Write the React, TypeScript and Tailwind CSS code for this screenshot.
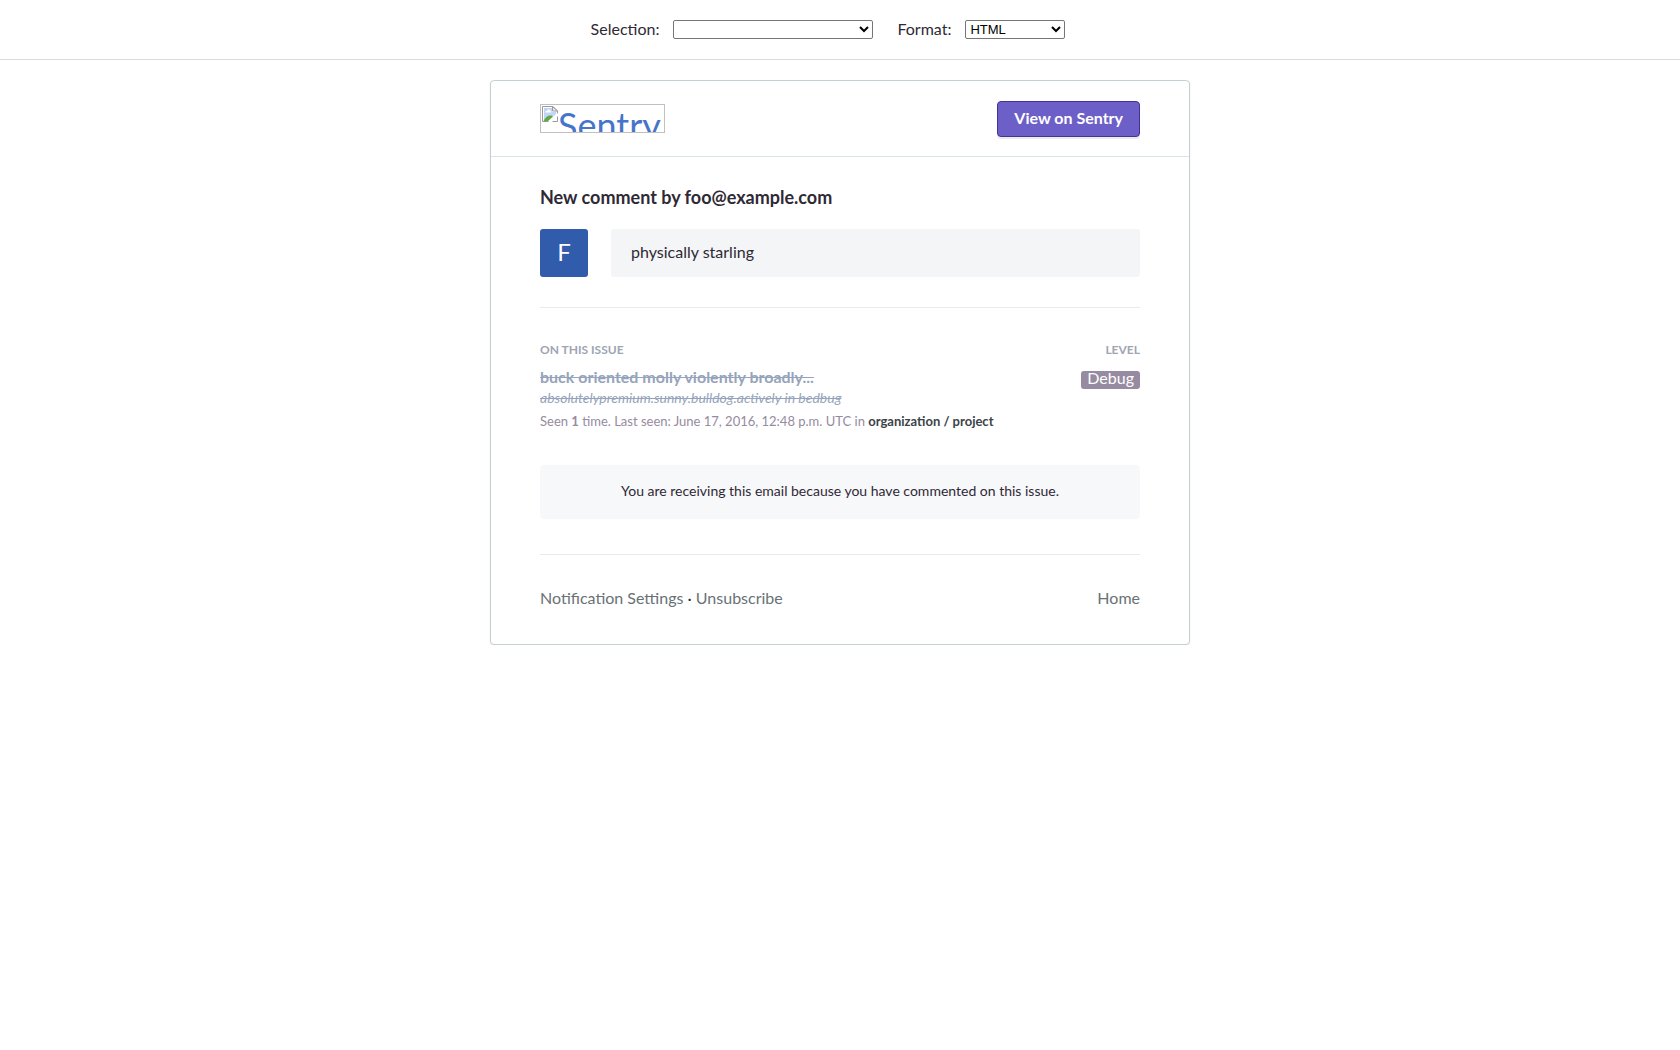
import React from "react";

function BrokenImageIcon() {
  return (
    <svg width="16" height="16" viewBox="0 0 16 16" className="shrink-0" aria-hidden="true">
      <path d="M0.5 0.5H11L15.500 5V15.500H0.500Z" fill="#fff" stroke="#9a9a9a" />
      <path d="M2 2H10V6H14V8L7 14H2Z" fill="#c3d5f7" />
      <path d="M3 6.500C3 5 4.500 5 5 5C5.500 3 8 3 8.500 5C9.500 5 9.500 6.500 9 6.500Z" fill="#fff" />
      <path d="M1.500 15C3 11.500 6 9.500 8 9.500C9.500 9.500 10.500 10 11 10.500L6 15Z" fill="#5cab3b" />
      <path d="M10.500 0.500V5H15.500Z" fill="#eee" stroke="#9a9a9a" />
      <path d="M6 16L16 7V10L10 16Z" fill="#fff" />
    </svg>
  );
}

export default function App() {
  return (
    <div className="font-[Lato,sans-serif] text-base leading-6 text-[#2f2936]">
      <form className="flex h-15 items-center justify-center gap-6 border-b border-[#d9d9d9] pr-6">
        <div className="flex items-center gap-3.5">
          <label htmlFor="selection" className="pb-px">Selection:</label>
          <select
            id="selection"
            defaultValue=""
            className="h-[19px] w-50 rounded-xs border border-[#767676] bg-white font-[Liberation_Sans,sans-serif] text-[13px] leading-4 text-black"
          >
            <option value=""></option>
          </select>
        </div>
        <div className="flex items-center gap-3.5">
          <label htmlFor="format" className="pb-px">Format:</label>
          <select
            id="format"
            defaultValue="html"
            className="h-[19px] w-25 rounded-xs border border-[#767676] bg-white font-[Liberation_Sans,sans-serif] text-[13px] leading-4 text-black"
          >
            <option value="html">HTML</option>
            <option value="text">Plaintext</option>
          </select>
        </div>
      </form>

      <main className="mx-auto mt-5 max-w-[700px] rounded-sm border border-[#c4d0d3] bg-white shadow-[0_1px_2px_rgba(0,0,0,0.08)]">
        <header className="flex items-start justify-between border-b border-[#dbe5e9] px-[49px] pt-5 pb-[19px]">
          <a
            href="#home"
            className="mt-[3px] flex h-[29px] w-[125px] items-start overflow-hidden border border-[#c0c0c0] p-px text-[#4674ca]"
          >
            <BrokenImageIcon />
            <span className="text-4xl leading-[38px]">Sentry</span>
          </a>
          <a
            href="#issue"
            className="flex h-9 items-center rounded-sm border border-[#413496] bg-[#6c5fc7] px-4 pb-0.5 font-bold text-white shadow-[0_2px_0_rgba(0,0,0,0.08)]"
          >
            View on Sentry
          </a>
        </header>

        <div className="px-[49px]">
          <section className="border-b border-[#e7ebee] pt-7 pb-[30px]">
            <h1 className="text-lg leading-6 font-bold">New comment by foo@example.com</h1>
            <div className="mt-5 flex gap-[23px]">
              <div className="flex size-12 shrink-0 items-center justify-center rounded-[3px] bg-[#315cac] pb-0.5 text-2xl text-white">
                F
              </div>
              <p className="flex-1 rounded-[3px] bg-[#f4f5f7] px-5 pt-[11px] pb-[13px]">physically starling</p>
            </div>
          </section>

          <section className="pt-8">
            <div className="flex justify-between text-xs leading-5 font-bold text-[#9da5b2] uppercase">
              <h2>On this issue</h2>
              <h2>Level</h2>
            </div>
            <div className="mt-[7px] flex items-start justify-between">
              <div>
                <div className="leading-5 font-bold text-[#96a4bb] line-through">
                  buck oriented molly violently broadly...
                </div>
                <div className="mt-px text-sm leading-5 text-[#96a4bb] italic line-through">
                  absolutelypremium.sunny.bulldog.actively in bedbug
                </div>
                <div className="mt-[3px] text-[13px] leading-5 text-[#968ba0]">
                  Seen <strong>1</strong> time. Last seen: June 17, 2016, 12:48 p.m. UTC in{" "}
                  <a href="#project" className="font-bold text-[#3b4347]">organization / project</a>
                </div>
              </div>
              <span className="mt-1 h-[18px] rounded-[3px] bg-[#968ba0] px-1.5 leading-[14px] text-white">Debug</span>
            </div>
            <p className="mt-[34px] rounded-[3px] bg-[#f7f8fa] px-5 pt-[14px] pb-4 text-center text-sm leading-6">
              You are receiving this email because you have commented on this issue.
            </p>
          </section>

          <footer className="mt-[35px] flex justify-between border-t border-[#e7ebee] pt-[31px] pb-[34px]">
            <div>
              <a href="#settings" className="text-[#687276]">Notification Settings</a> ·{" "}
              <a href="#unsubscribe" className="text-[#687276]">Unsubscribe</a>
            </div>
            <a href="#home" className="text-[#687276]">Home</a>
          </footer>
        </div>
      </main>
    </div>
  );
}
